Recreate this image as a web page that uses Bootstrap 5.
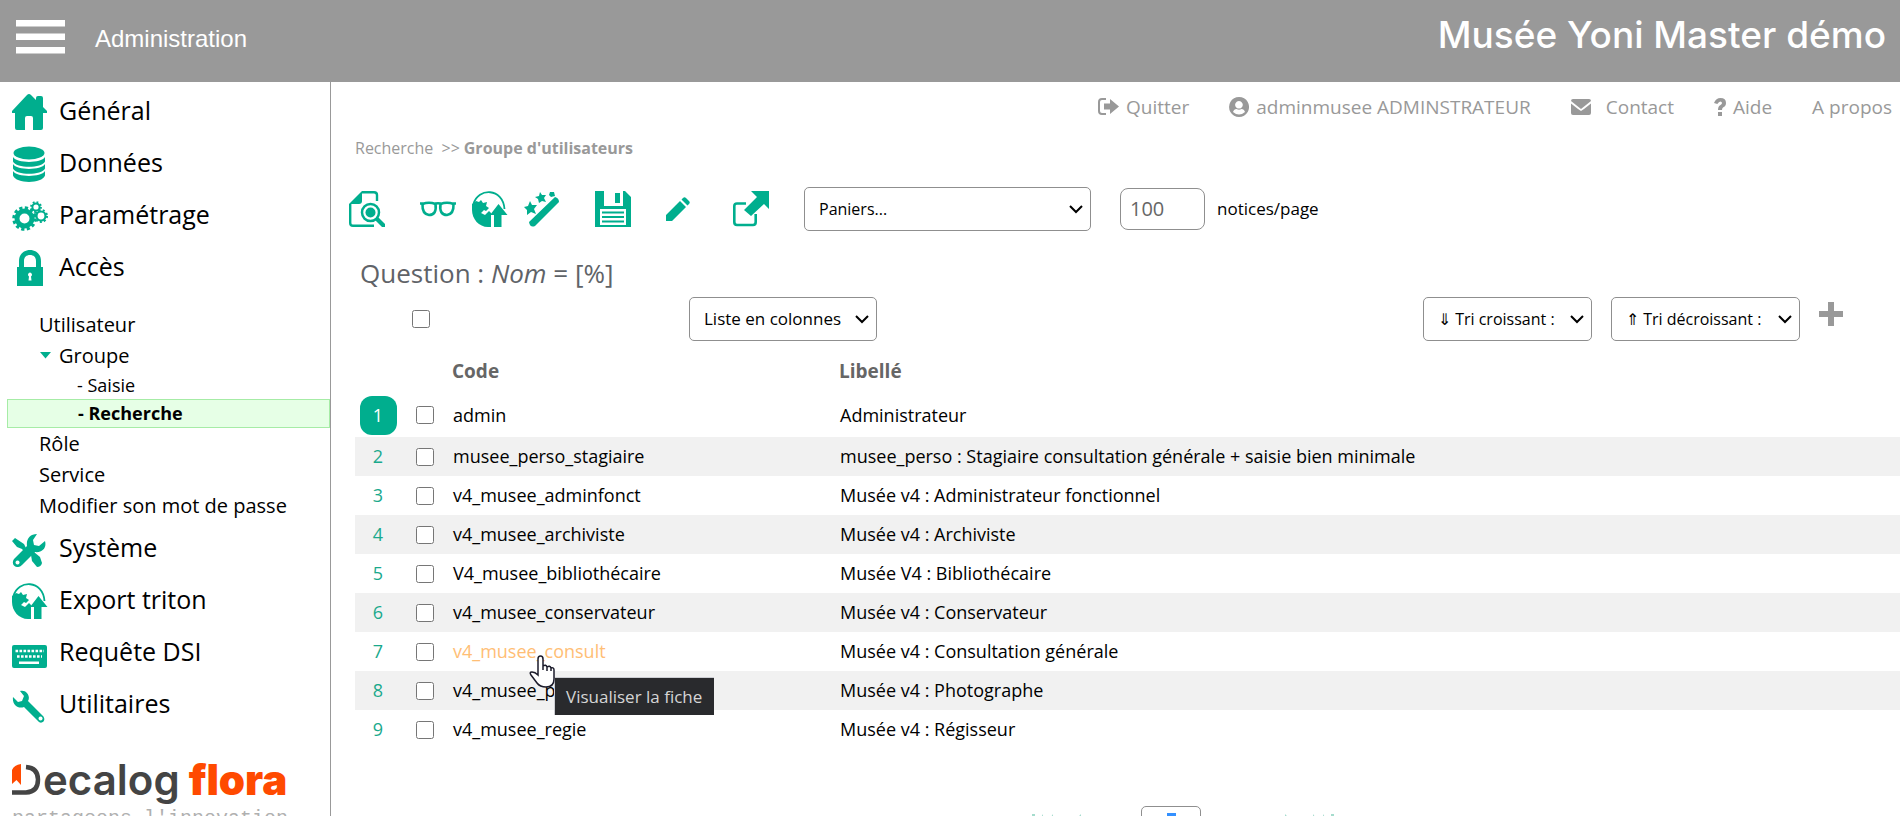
<!DOCTYPE html>
<html lang="fr">
<head>
<meta charset="utf-8">
<meta name="viewport" content="width=device-width, initial-scale=1">
<title>Musée Yoni Master démo - Groupe d'utilisateurs</title>
<link href="https://cdn.jsdelivr.net/npm/bootstrap@5.3.0/dist/css/bootstrap.min.css" rel="stylesheet">
<style>
  :root { --flora: #00ae8e; --grey: #999; }
  body { font-family: "Open Sans", "Noto Sans", sans-serif; font-size: 18px; color: #000; background: #fff; }
  a { color: inherit; text-decoration: none; }
  svg { display: block; flex: none; fill: currentColor; }
  .ico { width: 36px; height: 36px; color: var(--flora); }
  .ico-small { width: 24px; height: 24px; }
  .icon-btn { border: 0; background: none; padding: 0; }

  .topbar { height: 82px; background: var(--grey); color: #fff; padding: 0 14px 8px 16px; flex: none; }
  .topbar .section-name { font: 24px "Liberation Sans", sans-serif; margin-left: 30px; padding-top: 3px; }
  .topbar .site-name { font: 500 37px/44px Inter, sans-serif; padding-bottom: 4px; }

  .sidebar { width: 331px; flex: none; border-right: 1px solid var(--grey); padding-top: 4px; }
  .menu-main { height: 52px; padding-left: 12px; gap: 11px; font-size: 25px; }
  .menu-main span { padding-bottom: 5px; line-height: 40px; }
  .submenu { padding: 15px 0 2px 7px; font-size: 20px; }
  .submenu a { display: block; line-height: 31px; padding-left: 32px; }
  .submenu .leaf { font-size: 18px; line-height: 28px; padding-left: 70px; }
  .submenu .leaf.active { line-height: 27px; border: 1px solid #a6eca6; background: #e6ffe6; font-weight: 700; }
  .submenu .opened { display: flex; align-items: center; gap: 8px; padding-left: 33px; }
  .submenu .opened svg { color: var(--flora); }
  .logo { height: 52px; margin: 23px 0 0 12px; font: 600 42px/52px Inter, sans-serif; color: #444; }
  .logo b { font-weight: 900; color: #ff4a00; margin-left: 9px; }
  .tagline { font: 20px/22px "Liberation Mono", monospace; color: #b0b0b0; margin: 2px 0 0 12px; }

  .user-links { height: 50px; padding-right: 8px; color: var(--grey); gap: 40px; font-size: 19px; }
  .user-links a { display: flex; align-items: center; gap: 7px; }
  .crumbs { height: 32px; line-height: 32px; padding-left: 24px; font-size: 16px; color: var(--grey); }
  .toolbar { padding: 23px 0 0 18px; gap: 35px; }
  .box-select { height: 44px; border: 1px solid #8f8f8f; border-radius: 5px; font-size: 16px; color: #000; padding: 0 28px 0 14px;
    background: #fff url("data:image/svg+xml,%3csvg xmlns='http://www.w3.org/2000/svg' viewBox='0 0 14 10'%3e%3cpath fill='none' stroke='%23000' stroke-width='2' d='m1 2 6 6 6-6'/%3e%3c/svg%3e") no-repeat right 7px center / 14px 10px; }
  .baskets { width: 287px; }
  .per-page { width: 85px; height: 42px; margin-left: 29px; border: 1px solid #8f8f8f; border-radius: 8px; font-size: 20px; color: #666; padding: 0 9px 2px; }
  .per-page-label { font-size: 17px; margin-left: 12px; }
  .question { font-size: 26px; line-height: 48px; margin: 18px 0 0 29px; color: #5f6368; font-weight: 400; }
  .tick { width: 18px; height: 18px; margin: 0; display: block; }
  .list-bar { padding: 0 57px 0 81px; }
  .list-mode { width: 188px; margin-left: 259px; font-size: 17px; }
  .sort-up { width: 169px; }
  .sort-down { width: 189px; margin: 0 19px; }
  .add-sort { color: var(--grey); }

  .results { margin-left: 24px; }
  .results table { table-layout: fixed; --bs-table-bg: transparent; color: #000; }
  .results td, .results th { padding: 0 4px; height: 39px; vertical-align: middle; line-height: 27px; }
  .results th { height: 52px; padding: 8px 3px 0; font-size: 19px; color: #666; }
  .results tr:nth-child(even) td { background: #f1f1f1; }
  .results tr.current td { height: 44px; }
  .results td:first-child { color: #1aa98c; text-align: center; }
  .results .tick { margin: 0 auto; }
  .rank { display: block; width: 37px; height: 39px; line-height: 39px; margin: 0 auto; border-radius: 12px; background: var(--flora); color: #fff; }
  .c-rank { width: 46px; } .c-tick { width: 48px; } .c-code { width: 387px; }
  .hovered { color: #ffbe75; position: relative; display: inline-block; }
  .pointer { position: absolute; left: 76px; top: 17px; z-index: 3; }
  .hint { position: absolute; left: 101px; top: 39px; z-index: 2; white-space: nowrap; background: #292a2d; color: #d5d5d5;
    border: 1px solid #cdced3; border-width: 1px 0 0 1px; font-size: 17px; line-height: 37px; padding: 0 12px 0 11px; }

  .pager { padding: 57px 0 0 135px; gap: 60px; color: #a5dccd; }
  .page-no { width: 60px; height: 42px; border: 1px solid #8f8f8f; border-radius: 5px; text-align: center; font-size: 16px; color: #fff;
    background: linear-gradient(#3390ff, #3390ff) center / 9px 28px no-repeat; }
</style>
</head>
<body>
<svg width="0" height="0" class="position-absolute" aria-hidden="true">
  <symbol id="i-home" viewBox="0 0 36 36"><path d="M15 1Q17-1 19 1L24 6V4Q24 2 26 2H29Q31 2 31 4V13L35 17V19H31V34Q31 36 29 36H21V24Q21 22 19 22H15Q13 22 13 24V36H5Q3 36 3 34V19H0V17Z"/></symbol>
  <symbol id="i-data" viewBox="0 0 36 36"><ellipse cx="17" cy="7" rx="15.500" ry="6.500"/><path d="M1 11C5 17.500 29 17.500 33 11V15.500C30 22.500 4 22.500 1 15.500ZM1 18C5 24.500 29 24.500 33 18V22.500C30 29.500 4 29.500 1 22.500ZM1 25C5 31.500 29 31.500 33 25V29.500C30 38 4 38 1 29.500Z"/></symbol>
  <symbol id="i-gears" viewBox="0 0 36 36"><g fill="none" stroke="currentColor"><circle cx="12.500" cy="20.500" r="7.500" stroke-width="5"/><circle cx="12.500" cy="20.500" r="10" stroke-width="4.500" stroke-dasharray="3 2.236"/><circle cx="24" cy="9" r="3.600" stroke-width="2"/><circle cx="24" cy="9" r="5" stroke-width="1.800" stroke-dasharray="1.800 2.127"/><circle cx="29" cy="18" r="4.500" stroke-width="2.200"/><circle cx="29" cy="18" r="6" stroke-width="2" stroke-dasharray="2 2.188"/></g></symbol>
  <symbol id="i-lock" viewBox="0 0 36 36"><path fill-rule="evenodd" d="M7 17V11C7 4 12 0 18 0S29 4 29 11V17H31V36H5V17ZM12 17H24V11C24 7 21.500 5 18 5S12 7 12 11ZM18 22.500A2.200 2.200 0 0 0 17 26.500L16.500 30.500H19.500L19 26.500A2.200 2.200 0 0 0 18 22.500Z"/></symbol>
  <symbol id="i-tools" viewBox="0 0 36 36"><g transform="translate(0 2)"><path d="M0 8 3 5 12 11 14 15 17 18 14 21 10 16 5 14Z"/><path d="M19 22 22 19 28 24 30 30Q29 34 25 34L20 28Z"/><path fill-rule="evenodd" d="M15 13C14 6 18 1 25 1L21 7 22 12 27 13 33 8C35 15 30 20 23 19L10 32C5 37-2 32 2 26ZM5.500 27.500A2 2 0 1 0 5.600 27.500Z"/></g></symbol>
  <symbol id="i-export" viewBox="0 0 36 36"><path fill="none" stroke="currentColor" stroke-width="1.800" d="M1.500 13C6-3.500 31-3.500 32.500 18"/><path d="M0 13 4 10 7 11 9 9 11 12 15 11 14 15 17 17 14 20 12 19 9 22 13 24 17 20 19 22V36H16C7 36 0 28 0 19Z"/><path d="M26.500 13 35.500 24H29.500V36H22V24H18Z"/></symbol>
  <symbol id="i-keys" viewBox="0 0 36 36"><path fill-rule="evenodd" d="M2 10H33Q35 10 35 12V31Q35 33 33 33H2Q0 33 0 31V12Q0 10 2 10ZM7 26.500V29H27V26.500Z"/><path fill="none" stroke="#fff" stroke-width="2.600" stroke-dasharray="2.600 1.400" d="M3.500 16H32M5 21.500H30"/></symbol>
  <symbol id="i-wrench" viewBox="0 0 36 36"><path transform="translate(0 1)" fill-rule="evenodd" d="M8 3C14 1 19 8 16 13L31 28C35 33 29 37 26 33L12 19C6 21 0 17 1 9L6 14 10 13 12 8ZM28.500 28.500A2 2 0 1 0 28.600 28.500Z"/></symbol>
  <symbol id="i-doc" viewBox="0 0 36 36"><path fill="none" stroke="currentColor" stroke-width="2.400" d="M13 1.200H25Q28 1.200 28 4V10M1.200 13V32Q1.200 34.800 4 34.800H25"/><path d="M0 13 13 0V10Q13 13 10 13Z"/><circle cx="21.500" cy="21.500" r="8.500" fill="none" stroke="currentColor" stroke-width="2.500"/><circle cx="21.500" cy="21.500" r="5"/><path d="M26 29 29 26 36 33V36H33Z"/></symbol>
  <symbol id="i-glasses" viewBox="0 0 36 36"><path fill="none" stroke="currentColor" stroke-width="2.600" d="M2.500 13Q9 10.500 15.500 13Q17 24 9 24Q2 23 2.500 13ZM20.500 13Q27 10.500 33.500 13Q34 23 27 24Q19 24 20.500 13ZM0 12.500H4M14 13.500Q18 11 22 13.500M32 12.500H36"/></symbol>
  <symbol id="i-wand" viewBox="0 0 36 36"><path d="M5 31 31 6Q35 7 35 11L11 35Q6 37 5 31ZM16 1 18 4 22 4 20 7 22 11 18 10 15 12 14 8 11 6 15 5ZM6 10 8 14 13 14 10 18 12 23 7 21 3 24 3 19 0 16 4 15ZM26 1H30L31 5L27 6L25 4Z"/></symbol>
  <symbol id="i-save" viewBox="0 0 36 36"><path fill-rule="evenodd" d="M0 0H9V15H28V0H30L36 6V36H0ZM5 18V34H31V18Z"/><path d="M20 2H25V12H20ZM7 20.500H29V22.500H7ZM7 25H29V27H7ZM7 29.500H29V31.500H7Z"/></symbol>
  <symbol id="i-pencil" viewBox="0 0 24 24"><path d="M0 18 14 4 20 10 6 24H0ZM15.500 2.500 17 1Q18.500-.5 20 1L23 4Q24.500 5.500 23 7L21.500 8.500Z"/></symbol>
  <symbol id="i-open" viewBox="0 0 36 36"><path fill="none" stroke="currentColor" stroke-width="2.600" d="M13 12.500H4Q1.300 12.500 1.300 15V31Q1.300 34 4 34H20Q22.700 34 22.700 31V23"/><path d="M18 0H36V18L31 13 18 25 11 19 24 6Z"/></symbol>
</svg>

<div class="vh-100 overflow-hidden d-flex flex-column">
  <header class="topbar d-flex align-items-center">
    <button class="icon-btn text-white" type="button" aria-label="Menu"><svg width="49" height="34"><path d="M0 0H49V6.500H0ZM0 13.500H49V20H0ZM0 27H49V33.500H0Z"/></svg></button>
    <div class="section-name">Administration</div>
    <div class="site-name ms-auto">Musée Yoni Master démo</div>
  </header>

  <div class="d-flex flex-fill">
    <nav class="sidebar" aria-label="Menu principal">
      <a href="#" class="menu-main d-flex align-items-center"><svg class="ico"><use href="#i-home"/></svg><span>Général</span></a>
      <a href="#" class="menu-main d-flex align-items-center"><svg class="ico"><use href="#i-data"/></svg><span>Données</span></a>
      <a href="#" class="menu-main d-flex align-items-center"><svg class="ico"><use href="#i-gears"/></svg><span>Paramétrage</span></a>
      <a href="#" class="menu-main d-flex align-items-center"><svg class="ico"><use href="#i-lock"/></svg><span>Accès</span></a>
      <div class="submenu">
        <a href="#">Utilisateur</a>
        <a href="#" class="opened"><svg width="11" height="7"><path d="M0 0H11L5.500 6.500Z"/></svg>Groupe</a>
        <a href="#" class="leaf">- Saisie</a>
        <a href="#" class="leaf active">- Recherche</a>
        <a href="#">Rôle</a>
        <a href="#">Service</a>
        <a href="#">Modifier son mot de passe</a>
      </div>
      <a href="#" class="menu-main d-flex align-items-center"><svg class="ico"><use href="#i-tools"/></svg><span>Système</span></a>
      <a href="#" class="menu-main d-flex align-items-center"><svg class="ico"><use href="#i-export"/></svg><span>Export triton</span></a>
      <a href="#" class="menu-main d-flex align-items-center"><svg class="ico"><use href="#i-keys"/></svg><span>Requête DSI</span></a>
      <a href="#" class="menu-main d-flex align-items-center"><svg class="ico"><use href="#i-wrench"/></svg><span>Utilitaires</span></a>
      <div class="logo d-flex align-items-center">
        <svg width="31" height="32" role="img" aria-label="D"><path fill="#ff4a00" d="M0 6Q2 1 9 0V21L4.500 16 0 20Z"/><path fill="none" stroke="#444" stroke-width="4.500" d="M14 3Q26 4 26 15.500Q26 28 14 28.500H0"/></svg><span>ecalog</span><b>flora</b>
      </div>
      <div class="tagline">partageons l'innovation</div>
    </nav>

    <main class="flex-fill">
      <div class="user-links d-flex align-items-center justify-content-end">
        <a href="#"><svg width="21" height="18"><path fill="none" stroke="currentColor" stroke-width="2" d="M8 1H4Q1 1 1 4V13Q1 16 4 16H8"/><path d="M6 5.500H12V1L21 8.500 12 16V11.500H6Z"/></svg>Quitter</a>
        <a href="#"><svg width="20" height="20"><path fill-rule="evenodd" d="M10 0A10 10 0 1 0 10.100 0ZM10 4A3.800 3.800 0 1 1 9.900 4ZM4 15Q5 12 7.500 12 10 13.500 12.500 12 15 12 16 15 10 20 4 15Z"/></svg>adminmusee ADMINSTRATEUR</a>
        <a href="#"><svg width="20" height="16" class="me-2"><path d="M0 2Q0 0 2 0H18Q20 0 20 2L10 10ZM0 4.500 7 10 10 12 13 10 20 4.500V14Q20 16 18 16H2Q0 16 0 14Z"/></svg>Contact</a>
        <a href="#"><svg width="12" height="18"><path d="M0 5Q2 0 6.500 0 12 0 12 5 12 8 9 9.500 8 10 8 12H4Q4 8 6.500 7 8 6 8 5 8 3.500 6.200 3.500 5 3.500 3.300 6ZM4 14H8V18H4Z"/></svg>Aide</a>
        <a href="#">A propos</a>
      </div>
      <div class="crumbs">Recherche <span class="mx-1">&gt;&gt;</span><b>Groupe d'utilisateurs</b></div>

      <div class="toolbar d-flex align-items-center">
        <button class="icon-btn" type="button" aria-label="Aperçu"><svg class="ico"><use href="#i-doc"/></svg></button>
        <div class="d-flex gap-3">
          <button class="icon-btn" type="button" aria-label="Visualiser"><svg class="ico"><use href="#i-glasses"/></svg></button>
          <button class="icon-btn" type="button" aria-label="Exporter"><svg class="ico"><use href="#i-export"/></svg></button>
          <button class="icon-btn" type="button" aria-label="Assistant"><svg class="ico"><use href="#i-wand"/></svg></button>
        </div>
        <button class="icon-btn" type="button" aria-label="Enregistrer"><svg class="ico"><use href="#i-save"/></svg></button>
        <button class="icon-btn me-2" type="button" aria-label="Modifier"><svg class="ico ico-small"><use href="#i-pencil"/></svg></button>
        <button class="icon-btn" type="button" aria-label="Ouvrir"><svg class="ico"><use href="#i-open"/></svg></button>
        <div class="d-flex align-items-center">
          <select class="form-select box-select baskets" aria-label="Paniers"><option>Paniers...</option></select>
          <input class="per-page" id="perPage" type="text" value="100">
          <label class="per-page-label" for="perPage">notices/page</label>
        </div>
      </div>

      <h1 class="question">Question : <i>Nom</i> = [%]</h1>

      <div class="list-bar d-flex align-items-center">
        <input class="tick" type="checkbox" aria-label="Tout sélectionner">
        <select class="form-select box-select list-mode" aria-label="Mode de liste"><option>Liste en colonnes</option></select>
        <select class="form-select box-select sort-up ms-auto" aria-label="Tri croissant"><option>⇓ Tri croissant :</option></select>
        <select class="form-select box-select sort-down" aria-label="Tri décroissant"><option>⇑ Tri décroissant :</option></select>
        <button class="icon-btn add-sort" type="button" aria-label="Ajouter"><svg width="24" height="34"><path d="M9 0H15V9H24V15H15V24H9V15H0V9H9Z"/></svg></button>
      </div>

      <div class="results">
        <table class="table table-borderless mb-0">
          <colgroup><col class="c-rank"><col class="c-tick"><col class="c-code"><col></colgroup>
          <thead><tr><th></th><th></th><th scope="col">Code</th><th scope="col">Libellé</th></tr></thead>
          <tbody>
            <tr class="current"><td><span class="rank">1</span></td><td><input class="tick" type="checkbox" aria-label="admin"></td><td><a href="#">admin</a></td><td>Administrateur</td></tr>
            <tr><td>2</td><td><input class="tick" type="checkbox" aria-label="musee_perso_stagiaire"></td><td><a href="#">musee_perso_stagiaire</a></td><td>musee_perso : Stagiaire consultation générale + saisie bien minimale</td></tr>
            <tr><td>3</td><td><input class="tick" type="checkbox" aria-label="v4_musee_adminfonct"></td><td><a href="#">v4_musee_adminfonct</a></td><td>Musée v4 : Administrateur fonctionnel</td></tr>
            <tr><td>4</td><td><input class="tick" type="checkbox" aria-label="v4_musee_archiviste"></td><td><a href="#">v4_musee_archiviste</a></td><td>Musée v4 : Archiviste</td></tr>
            <tr><td>5</td><td><input class="tick" type="checkbox" aria-label="V4_musee_bibliothécaire"></td><td><a href="#">V4_musee_bibliothécaire</a></td><td>Musée V4 : Bibliothécaire</td></tr>
            <tr><td>6</td><td><input class="tick" type="checkbox" aria-label="v4_musee_conservateur"></td><td><a href="#">v4_musee_conservateur</a></td><td>Musée v4 : Conservateur</td></tr>
            <tr><td>7</td><td><input class="tick" type="checkbox" aria-label="v4_musee_consult"></td><td><a href="#" class="hovered">v4_musee_consult<svg class="pointer" width="27" height="34"><path fill="#fff" stroke="#1b1b2b" stroke-width="1.500" d="M9 20V4Q9 1 11.500 1T14 4V11Q17 9 18 12 21 10 22 13 25 12 25 15V24Q25 32 17 32 11 32 8 28L2 20Q0 17 3 17 6 17 9 20ZM14 11V15M18 12V16M22 13V16"/></svg><span class="hint" role="tooltip">Visualiser la fiche</span></a></td><td>Musée v4 : Consultation générale</td></tr>
            <tr><td>8</td><td><input class="tick" type="checkbox" aria-label="v4_musee_photo"></td><td><a href="#">v4_musee_photo</a></td><td>Musée v4 : Photographe</td></tr>
            <tr><td>9</td><td><input class="tick" type="checkbox" aria-label="v4_musee_regie"></td><td><a href="#">v4_musee_regie</a></td><td>Musée v4 : Régisseur</td></tr>
          </tbody>
        </table>
      </div>

      <div class="pager d-flex justify-content-center align-items-center">
        <div class="d-flex gap-3 align-items-center">
          <svg width="22" height="26" role="img" aria-label="Première page"><path d="M1 0H4V26H1ZM12 0V26L4 13ZM22 0V26L13 13Z"/></svg>
          <svg width="12" height="26" role="img" aria-label="Page précédente"><path d="M12 0V26L0 13Z"/></svg>
        </div>
        <input class="page-no" type="text" value="1" aria-label="Page">
        <div class="d-flex gap-3 align-items-center ms-4">
          <svg width="12" height="26" role="img" aria-label="Page suivante"><path d="M0 0V26L12 13Z"/></svg>
          <svg width="22" height="26" role="img" aria-label="Dernière page"><path d="M0 0V26L9 13ZM10 0V26L18 13ZM18 0H21V26H18Z"/></svg>
        </div>
      </div>
    </main>
  </div>
</div>
<script src="https://cdn.jsdelivr.net/npm/bootstrap@5.3.0/dist/js/bootstrap.bundle.min.js"></script>
</body>
</html>
